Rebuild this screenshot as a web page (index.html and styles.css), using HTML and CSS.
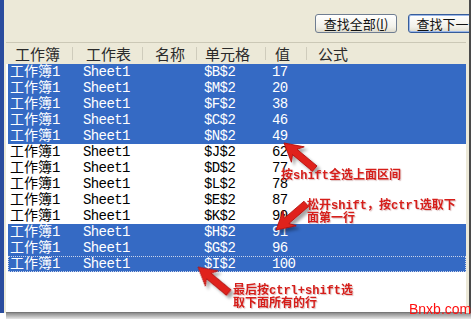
FILE: index.html
```html
<!DOCTYPE html>
<html lang="zh-CN">
<head>
  <meta charset="UTF-8" />
  <title>查找结果</title>
  <link rel="stylesheet" href="styles.css">
</head>
<body>
  <div class="window">
    <div class="toolbar">
      <button class="btn">查找全部(<u>I</u>)</button>
      <button class="btn btn-default">查找下一个</button>
    </div>
    <div class="results">
      <div class="head">
        <span>工作簿</span><span>工作表</span><span>名称</span><span>单元格</span><span>值</span><span>公式</span>
      </div>
      <div class="rows">
        <div class="row sel"><span>工作簿1</span><span class="lat">Sheet1</span><span></span><span class="lat">$B$2</span><span class="lat">17</span></div>
        <div class="row sel"><span>工作簿1</span><span class="lat">Sheet1</span><span></span><span class="lat">$M$2</span><span class="lat">20</span></div>
        <div class="row sel"><span>工作簿1</span><span class="lat">Sheet1</span><span></span><span class="lat">$F$2</span><span class="lat">38</span></div>
        <div class="row sel"><span>工作簿1</span><span class="lat">Sheet1</span><span></span><span class="lat">$C$2</span><span class="lat">46</span></div>
        <div class="row sel"><span>工作簿1</span><span class="lat">Sheet1</span><span></span><span class="lat">$N$2</span><span class="lat">49</span></div>
        <div class="row"><span>工作簿1</span><span class="lat">Sheet1</span><span></span><span class="lat">$J$2</span><span class="lat">62</span></div>
        <div class="row"><span>工作簿1</span><span class="lat">Sheet1</span><span></span><span class="lat">$D$2</span><span class="lat">77</span></div>
        <div class="row"><span>工作簿1</span><span class="lat">Sheet1</span><span></span><span class="lat">$L$2</span><span class="lat">78</span></div>
        <div class="row"><span>工作簿1</span><span class="lat">Sheet1</span><span></span><span class="lat">$E$2</span><span class="lat">87</span></div>
        <div class="row"><span>工作簿1</span><span class="lat">Sheet1</span><span></span><span class="lat">$K$2</span><span class="lat">90</span></div>
        <div class="row sel"><span>工作簿1</span><span class="lat">Sheet1</span><span></span><span class="lat">$H$2</span><span class="lat">91</span></div>
        <div class="row sel"><span>工作簿1</span><span class="lat">Sheet1</span><span></span><span class="lat">$G$2</span><span class="lat">96</span></div>
        <div class="row sel focus"><span>工作簿1</span><span class="lat">Sheet1</span><span></span><span class="lat">$I$2</span><span class="lat">100</span></div>
      </div>
    </div>
  </div>
  <div class="shadow"></div>

  <!-- annotations drawn over the screenshot -->
  <svg class="arrows" width="471" height="319" viewBox="0 0 471 319">
    <defs>
      <filter id="drop" x="-50%" y="-50%" width="200%" height="200%">
        <feDropShadow dx="3" dy="3" stdDeviation="1.5" flood-color="#000" flood-opacity="0.35"/>
      </filter>
      <g id="arrow">
        <polygon points="0,0 -18,-10 -14,-3.5 -40,-3.5 -40,3.5 -14,3.5 -18,10" />
      </g>
    </defs>
    <g fill="#e0221c" stroke="#b0100c" stroke-width="0.8" filter="url(#drop)">
      <use href="#arrow" transform="translate(284 143) rotate(219.8)"/>
      <use href="#arrow" transform="translate(276 230) rotate(139.2)"/>
      <use href="#arrow" transform="translate(198 267) rotate(219.8)"/>
    </g>
  </svg>
  <p class="note note-1">按shift全选上面区间</p>
  <p class="note note-2">松开shift，按ctrl选取下<br>面第一行</p>
  <p class="note note-3">最后按ctrl+shift选<br>取下面所有的行</p>
  <div class="mark">Bnxb.com</div>
</body>
</html>
```

FILE: styles.css
```css
body {
  margin: 0;
  width: 471px;
  height: 319px;
  overflow: hidden;
  position: relative;
  background: #fff;
  font-family: "Noto Sans CJK SC", sans-serif;
}
.window {
  box-sizing: border-box;
  height: 313px;
  display: flex;
  flex-direction: column;
  background: #ece9d8;
  border-left: 4px solid #2a4c9e;
  border-right: 2px solid #4a4a4a;
  overflow: hidden;
}
.toolbar {
  height: 42px;
  flex: none;
  display: flex;
  justify-content: flex-end;
  align-items: flex-start;
  gap: 11px;
  padding-top: 14px;
  box-sizing: border-box;
  margin-right: -21px;
}
.btn {
  width: 82px;
  height: 19px;
  padding: 0;
  font-family: "Noto Sans CJK SC", sans-serif;
  font-size: 13px;
  line-height: 17px;
  color: #111;
  background: linear-gradient(#ffffff, #f2f1ea 70%, #dedbcd);
  border: 1px solid #6f7d91;
  border-radius: 3px;
}
.btn-default {
  border-color: #365c9a;
  box-shadow: inset 0 0 0 1px #9bb7e8;
}
.results {
  flex: 1;
  display: flex;
  flex-direction: column;
  margin: 0 3px 0 2px;
  background: #fff;
  border-bottom: 1px solid #777;
}
.head {
  height: 22px;
  flex: none;
  display: grid;
  grid-template-columns: 67px 70px 54px 69px 41px 1fr;
  align-items: center;
  background: #ece9d8;
  border-top: 1px solid #cbc8b6;
  box-sizing: border-box;
  font-size: 15px;
  color: #2a2a2a;
  line-height: 20px;
}
.head span {
  background: linear-gradient(#cfccbc, #cfccbc) right center / 1px 13px no-repeat;
  white-space: nowrap;
}
.head span:nth-child(1) { padding-left: 9px; }
.head span:nth-child(2) { padding-left: 13px; }
.head span:nth-child(3) { padding-left: 12px; }
.head span:nth-child(4) { padding-left: 8px; }
.head span:nth-child(5) { padding-left: 9px; }
.head span:nth-child(6) { padding-left: 11px; background: none; }
.rows {
  padding-left: 2px;
}
.row {
  height: 16px;
  display: grid;
  grid-template-columns: 65px 70px 54px 69px 1fr;
  font-family: "Liberation Mono", "Noto Sans CJK SC", monospace;
  font-size: 14px;
  line-height: 16px;
  color: #000;
  white-space: nowrap;
}
.row .lat {
  letter-spacing: -0.6px;
}
.row span:nth-child(1) { padding-left: 2px; }
.row span:nth-child(2) { padding-left: 10px; }
.row span:nth-child(4) { padding-left: 7px; }
.row span:nth-child(5) { padding-left: 6px; }
.sel {
  background: #356ac4;
  color: #fff;
}
.focus {
  outline: 1px dotted #c9d3ea;
  outline-offset: -1px;
}
.shadow {
  height: 6px;
  margin-left: 6px;
  background: linear-gradient(#8a8a8a, #e6e6e6);
}
.arrows {
  position: absolute;
  left: 0;
  top: 0;
}
.note {
  position: absolute;
  margin: 0;
  font-family: "Liberation Mono", "Noto Sans CJK SC", monospace;
  font-weight: bold;
  font-size: 12px;
  line-height: 13px;
  color: #d61e1a;
  white-space: nowrap;
  text-shadow: 1px 1px 1px rgba(120, 0, 0, 0.25);
}
.note-1 { left: 281px; top: 170px; }
.note-2 { left: 307px; top: 200px; }
.note-3 { left: 233px; top: 285px; }
.mark {
  position: absolute;
  left: 409px;
  top: 301px;
  font-family: "Liberation Sans", sans-serif;
  font-size: 14px;
  line-height: 16px;
  color: #ff1010;
}
```
